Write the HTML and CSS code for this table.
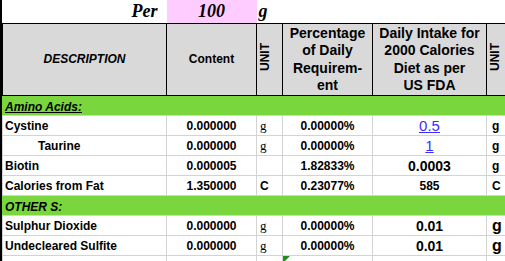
FILE: index.html
```html
<!DOCTYPE html>
<html>
<head>
<meta charset="utf-8">
<link rel="stylesheet" href="styles.css">
</head>
<body>
<div class="sheet">
<table class="grid">
  <colgroup>
    <col class="c-desc"><col class="c-content"><col class="c-unit"><col class="c-pct"><col class="c-daily"><col class="c-unit2">
  </colgroup>
  <tr class="per-row">
    <td class="per-label">Per</td>
    <td class="per-val">100</td>
    <td class="per-unit">g</td>
    <td></td><td></td><td></td>
  </tr>
  <tr class="head">
    <th class="h-desc">DESCRIPTION</th>
    <th class="h-small">Content</th>
    <th class="h-unit"><span class="vert">UNIT</span></th>
    <th>Percentage<br>of Daily<br>Requirem-<br>ent</th>
    <th>Daily Intake for<br>2000 Calories<br>Diet as per<br>US FDA</th>
    <th class="h-unit"><span class="vert">UNIT</span></th>
  </tr>
  <tr class="section first">
    <td colspan="6"><span class="sec-title u">Amino Acids:</span></td>
  </tr>
  <tr class="row">
    <td class="desc">Cystine</td>
    <td class="num">0.000000</td>
    <td class="unit serif">g</td>
    <td class="num">0.00000%</td>
    <td class="daily"><a class="link">0.5</a></td>
    <td class="unit2">g</td>
  </tr>
  <tr class="row">
    <td class="desc indent">Taurine</td>
    <td class="num">0.000000</td>
    <td class="unit serif">g</td>
    <td class="num">0.00000%</td>
    <td class="daily"><a class="link">1</a></td>
    <td class="unit2">g</td>
  </tr>
  <tr class="row">
    <td class="desc">Biotin</td>
    <td class="num">0.000005</td>
    <td class="unit"></td>
    <td class="num">1.82833%</td>
    <td class="daily big">0.0003</td>
    <td class="unit2">g</td>
  </tr>
  <tr class="row">
    <td class="desc">Calories from Fat</td>
    <td class="num">1.350000</td>
    <td class="unit">C</td>
    <td class="num">0.23077%</td>
    <td class="daily">585</td>
    <td class="unit2">C</td>
  </tr>
  <tr class="section">
    <td colspan="6"><span class="sec-title">OTHER S:</span></td>
  </tr>
  <tr class="row">
    <td class="desc">Sulphur Dioxide</td>
    <td class="num">0.000000</td>
    <td class="unit serif">g</td>
    <td class="num">0.00000%</td>
    <td class="daily big">0.01</td>
    <td class="unit2 big">g</td>
  </tr>
  <tr class="row">
    <td class="desc">Undecleared Sulfite</td>
    <td class="num">0.000000</td>
    <td class="unit serif">g</td>
    <td class="num">0.00000%</td>
    <td class="daily big">0.01</td>
    <td class="unit2 big">g</td>
  </tr>
  <tr class="row">
    <td class="desc"></td>
    <td class="num"></td>
    <td class="unit"></td>
    <td class="num flagged"></td>
    <td class="daily"></td>
    <td class="unit2"></td>
  </tr>
</table>
</div>
</body>
</html>
```

FILE: styles.css
```css
html, body {
  margin: 0;
  padding: 0;
  background: #ffffff;
  overflow: hidden;
}

.sheet {
  width: 505px;
  height: 261px;
  overflow: hidden;
  border-left: 2px solid #000;
  box-sizing: border-box;
}

.grid {
  border-collapse: collapse;
  table-layout: fixed;
  width: 524px;
  font-family: "Liberation Sans", Arial, sans-serif;
  color: #000;
}

.c-desc { width: 164px; }
.c-content { width: 90px; }
.c-unit { width: 26px; }
.c-pct { width: 90px; }
.c-daily { width: 114px; }
.c-unit2 { width: 40px; }

td, th {
  padding: 0;
  overflow: hidden;
  white-space: nowrap;
}

/* "Per 100 g" row */
.per-row td {
  height: 23px;
  font-family: "Liberation Serif", "Times New Roman", serif;
  font-weight: bold;
  font-style: italic;
  font-size: 18px;
  border: none;
  vertical-align: middle;
}
.per-row td.per-label {
  text-align: right;
  padding-right: 9px;
}
.per-row td.per-val {
  background: #ffccff;
  text-align: center;
}
.per-row td.per-unit {
  padding-left: 2px;
}

/* header */
.head th {
  height: 71px;
  background: #d9d9d9;
  border: 1px solid #000;
  font-size: 14px;
  font-weight: bold;
  line-height: 17.5px;
  text-align: center;
  vertical-align: middle;
}
.head th.h-desc {
  font-style: italic;
  font-size: 12px;
}
.head th.h-small {
  font-size: 12px;
}
.head th.h-unit {
  text-align: left;
  padding-left: 2px;
}
.vert {
  display: inline-block;
  writing-mode: vertical-rl;
  transform: rotate(180deg);
  font-size: 12px;
  line-height: 12px;
}

/* green section rows */
.section td {
  height: 19px;
  background: #7ad63d;
  border: 1px solid #7ad63d;
  border-bottom: 1px solid #d3d3d3;
  padding-left: 2px;
}
.section.first td {
  border-top: 1px solid #000;
}
.sec-title {
  font-size: 12px;
  font-weight: bold;
  font-style: italic;
}
.sec-title.u {
  text-decoration: underline;
}

/* data rows */
.row td {
  height: 19px;
  border: 1px solid #d3d3d3;
  font-size: 12px;
  font-weight: bold;
  vertical-align: middle;
}
.row td.desc {
  padding-left: 2px;
}
.row td.desc.indent {
  padding-left: 35px;
}
.num {
  text-align: center;
}
.row td.unit {
  padding-left: 3px;
}
.row td.unit.serif {
  font-family: "Liberation Serif", "Times New Roman", serif;
  font-weight: normal;
  font-size: 13px;
}
.daily {
  text-align: center;
}
.row td.daily.big {
  font-size: 14px;
}
.link {
  color: #3d2cff;
  text-decoration: underline;
  font-weight: normal;
  font-size: 15px;
}
.row td.unit2 {
  padding-left: 5px;
}
.row td.unit2.big {
  font-size: 16px;
}
.flagged {
  position: relative;
}
.flagged::before {
  content: "";
  position: absolute;
  left: 0;
  top: 0;
  border-top: 7px solid #1e8f1e;
  border-right: 7px solid transparent;
}
```
